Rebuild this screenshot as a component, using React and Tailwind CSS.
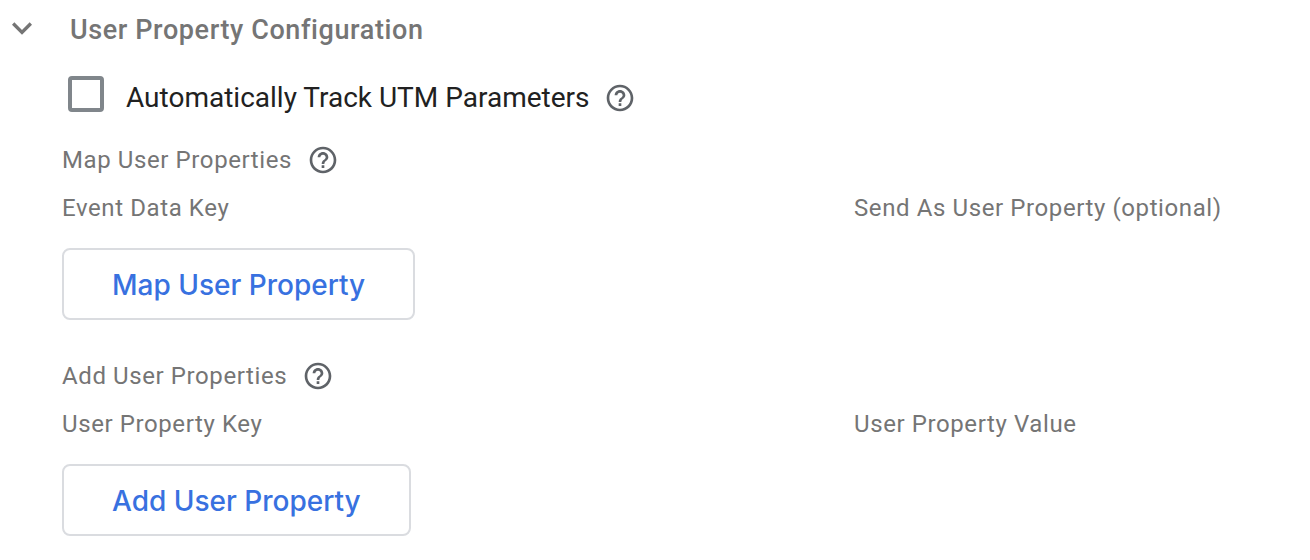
import React from "react";

function HelpIcon() {
  return (
    <button type="button" aria-label="Help" className="size-8 shrink-0 text-[#5f6368]">
      <svg viewBox="0 0 24 24" className="size-8" fill="currentColor" aria-hidden="true">
        <path d="M11 18h2v-2h-2v2zm1-16C6.48 2 2 6.48 2 12s4.480 10 10 10 10-4.480 10-10S17.520 2 12 2zm0 18c-4.410 0-8-3.590-8-8s3.590-8 8-8 8 3.590 8 8-3.590 8-8 8zm0-14c-2.210 0-4 1.790-4 4h2c0-1.100.9-2 2-2s2 .9 2 2c0 2-3 1.750-3 5h2c0-2.250 3-2.500 3-5 0-2.210-1.790-4-4-4z" />
      </svg>
    </button>
  );
}

function PropertyGroup({ title, keyLabel, valueLabel, action }) {
  return (
    <section className="flex flex-col items-start">
      <div className="flex h-12 items-center gap-[15px]">
        <h3>{title}</h3>
        <HelpIcon />
      </div>
      <div className="grid h-12 w-full grid-cols-[792px_1fr] items-center">
        <span>{keyLabel}</span>
        <span>{valueLabel}</span>
      </div>
      <button type="button" className="mt-4 h-18 rounded-lg border-2 border-[#dadce0] px-12 pt-1 font-[Inter,sans-serif] text-[28px] font-medium tracking-normal text-[#3871e0]">
        {action}
      </button>
    </section>
  );
}

export default function App() {
  return (
    <main className="bg-white font-[Roboto,sans-serif] text-2xl tracking-wide text-[#757575]">
      <h2>
        <button type="button" aria-expanded="true" className="flex h-15 items-start gap-7 pt-2 pl-0.5 text-[27px] leading-[44px] font-medium">
          <svg viewBox="0 0 24 24" className="size-10" fill="currentColor" aria-hidden="true">
            <path d="M16.590 8.590 12 13.170 7.410 8.590 6 10l6 6 6-6z" />
          </svg>
          User Property Configuration
        </button>
      </h2>
      <div className="pl-[62px]">
        <div className="flex h-19 items-center gap-[15px] pl-1.5">
          <label className="flex items-start gap-[22px] text-[28px] leading-[44px] tracking-normal text-[#212121]">
            <input type="checkbox" className="size-9 appearance-none rounded-sm border-4 border-[#80868b]" />
            Automatically Track UTM Parameters
          </label>
          <HelpIcon />
        </div>
        <div className="flex flex-col gap-8">
          <PropertyGroup title="Map User Properties" keyLabel="Event Data Key" valueLabel="Send As User Property (optional)" action="Map User Property" />
          <PropertyGroup title="Add User Properties" keyLabel="User Property Key" valueLabel="User Property Value" action="Add User Property" />
        </div>
      </div>
    </main>
  );
}
